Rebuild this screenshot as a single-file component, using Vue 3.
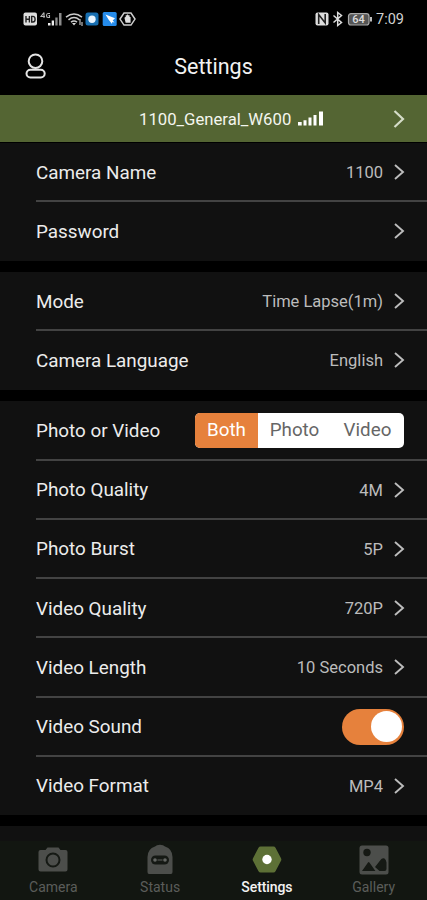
<script setup>
import { ref } from 'vue'

const groups = [
  [
    { label: 'Camera Name', value: '1100' },
    { label: 'Password', value: '' },
  ],
  [
    { label: 'Mode', value: 'Time Lapse(1m)' },
    { label: 'Camera Language', value: 'English' },
  ],
  [
    { label: 'Photo or Video', kind: 'segment' },
    { label: 'Photo Quality', value: '4M' },
    { label: 'Photo Burst', value: '5P' },
    { label: 'Video Quality', value: '720P' },
    { label: 'Video Length', value: '10 Seconds' },
    { label: 'Video Sound', kind: 'toggle' },
    { label: 'Video Format', value: 'MP4' },
  ],
]
const options = ['Both', 'Photo', 'Video']
const capture = ref('Both')
const sound = ref(true)
const tabs = ['Camera', 'Status', 'Settings', 'Gallery']
const tab = ref('Settings')
</script>

<template>
  <div class="screen">
    <div class="status">
      <svg class="status-left" width="114" height="18" viewBox="0 0 114 18">
        <rect x="0.5" y="2.5" width="13.5" height="13" rx="2" fill="#dedede" />
        <path d="M3 6v6.5M6.4 6v6.5M3 9.2h3.4M8.7 6.4h1.2q2.2 0 2.2 2.8t-2.200 2.8H8.7z" fill="none" stroke="#222" stroke-width="1.4" />
        <path d="M21 2.500l-3 4h4M21 2.500v5.500M27 3.500h-2q-1.500 0-1.500 2t1.500 2h1.500V5.500h-1" fill="none" stroke="#b5b5b5" stroke-width="1.100" />
        <path d="M25 15.500v-2.500h2.500v2.500zM28.700 15.500v-5h2.300v5z" fill="#eee" />
        <path d="M32.300 15.500v-8h2.300v8zM36 15.500V3h2.500v12.500z" fill="#8c8c8c" />
        <g fill="none" stroke="#ccc" stroke-width="1.5">
          <path d="M43 7.200q8-6.500 16 0M45.500 9.800q5.500-4.500 11 0M48 12.200q3-2.500 6 0" />
          <path d="M57 9v6M59 12v4" stroke-width="1.100" />
        </g>
        <path d="M49 13l2 2.500 2-2.500z" fill="#ddd" />
        <rect x="62.500" y="2.500" width="13" height="13" rx="2.500" fill="#176eb0" />
        <circle cx="69" cy="9.300" r="3.700" fill="#eaf6ff" />
        <rect x="79.700" y="2" width="14" height="14" rx="1.500" fill="#258bea" />
        <path d="M82.500 4.500l9.500 3.700-2.300 2.300 1.800 2-2.200-.5-.3 2-3.500-4.500z" fill="#fff" />
        <path d="M101 3.100h7l4 6-4 6h-7l-4-6z" fill="none" stroke="#ccc" stroke-width="1.500" />
        <path d="M101.500 8q0-1 1.200-1V5.300h1.200v-.8h1.200v.8h1.500V7h1v5.700h-5z" fill="#ddd" />
      </svg>
      <div class="status-right">
        <svg width="58" height="18" viewBox="0 0 58 18">
          <rect x="0.500" y="2.500" width="13" height="13" rx="2" fill="#ddd" />
          <path d="M3.700 14V4.500l6.500 8.500V4" fill="none" stroke="#222" stroke-width="1.600" />
          <path d="M18.500 5.500l8 7-3.800 3V2.500l3.800 3-8 7" fill="none" stroke="#ddd" stroke-width="1.500" />
          <rect x="33.500" y="3.700" width="20.500" height="11.300" rx="2.500" fill="#555" stroke="#aaa" stroke-width="1.200" />
          <path d="M55 7h2v4.500h-2z" fill="#bbb" />
          <text x="43.500" y="13" text-anchor="middle" class="battery">64</text>
        </svg>
        <span class="clock">7:09</span>
      </div>
    </div>

    <header class="header">
      <svg class="user" width="22" height="28" viewBox="0 0 22 28" fill="none" stroke="#e4e4e4" stroke-width="2">
        <circle cx="10.500" cy="9.200" r="6.800" />
        <rect x="1.500" y="17.700" width="18.200" height="7.800" rx="3.900" />
      </svg>
      <h1>Settings</h1>
    </header>

    <div class="device">
      <span class="device-name">1100_General_W600</span>
      <svg class="bars" width="26" height="15" viewBox="0 0 26 15" fill="#fff">
        <path d="M0 11h3.700v3.500H0zM5.500 9.300h3v5.200h-3zM10.500 6.500h3v8h-3zM15.500 4h3v10.500h-3zM21 .5h4v14h-4z" />
      </svg>
      <svg class="device-chevron" width="12" height="18" viewBox="0 0 12 18">
        <path d="M1.500 1l8.500 8-8.500 8" fill="none" stroke="#d5dcc8" stroke-width="2.200" />
      </svg>
    </div>

    <main class="list">
      <section v-for="(rows, i) in groups" :key="i" class="group">
        <div v-for="row in rows" :key="row.label" class="row">
          <span class="label">{{ row.label }}</span>
          <div v-if="row.kind === 'segment'" class="segment">
            <button v-for="o in options" :key="o" :class="{ on: capture === o }" @click="capture = o">{{ o }}</button>
          </div>
          <button v-else-if="row.kind === 'toggle'" class="toggle" :class="{ off: !sound }" @click="sound = !sound">
            <span class="knob"></span>
          </button>
          <template v-else>
            <span class="value">{{ row.value }}</span>
            <svg class="chevron" width="11" height="16" viewBox="0 0 11 16">
              <path d="M1 1l8 7-8 7" fill="none" stroke="#bdbdbd" stroke-width="1.900" />
            </svg>
          </template>
        </div>
      </section>
    </main>

    <nav class="tabs">
      <button v-for="t in tabs" :key="t" class="tab" :class="{ active: tab === t }" @click="tab = t">
        <svg v-if="t === 'Camera'" width="32" height="32" viewBox="0 0 32 32">
          <path d="M3.500 6h5l2-2.500h11l2 2.500h5q2 0 2 2v17.500q0 2-2 2h-25q-2 0-2-2V8q0-2 2-2z" fill="#4c4e4b" />
          <circle cx="16" cy="16" r="6.500" fill="none" stroke="#151914" stroke-width="2" />
        </svg>
        <svg v-else-if="t === 'Status'" width="32" height="32" viewBox="0 0 32 32">
          <path d="M3.500 28V13Q3.500 5 11 2.500q1.500-1.800 5-1.800t5 1.800Q28.500 5 28.500 13v15q0 2-1.500 2H5q-1.500 0-1.500-2z" fill="#4c4e4b" />
          <rect x="7" y="11.500" width="18" height="9" rx="4.500" fill="#151914" />
          <circle cx="11" cy="16" r="1.800" fill="#646663" />
          <circle cx="21" cy="16" r="1.800" fill="#646663" />
          <path d="M13.500 16h5" stroke="#464845" stroke-width="1.500" />
        </svg>
        <svg v-else-if="t === 'Settings'" width="32" height="32" viewBox="0 0 32 32">
          <path d="M9.500 2.500h13q1.300 0 2 1.200l5.500 10.500q.7 1.300 0 2.600l-5.500 10.500q-.7 1.200-2 1.200h-13q-1.300 0-2-1.200L2 16.800q-.7-1.300 0-2.600L7.500 3.700q.7-1.200 2-1.200z" fill="#5d7036" />
          <circle cx="16" cy="15.500" r="4.700" fill="#fff" />
        </svg>
        <svg v-else width="32" height="32" viewBox="0 0 32 32">
          <rect x="1.500" y="1.500" width="29" height="29" rx="2.500" fill="#4c4e4b" />
          <circle cx="9" cy="8.500" r="3.700" fill="#151914" />
          <path d="M4 27l6-8.500q.7-.8 1.400 0l6 8.500zM17 23l5.500-7q1.500-2.500 4-1.500 1.500 1 2 4V25q0 2-2 2h-5z" fill="#151914" />
        </svg>
        <span class="tab-label">{{ t }}</span>
      </button>
    </nav>
  </div>
</template>

<style>
body {
  background: #000;
}
</style>

<style scoped>
.screen {
  width: 427px;
  height: 900px;
  display: flex;
  flex-direction: column;
  overflow: hidden;
  background: #000;
  color: #e4e4e4;
  font-family: Roboto, "Liberation Sans", sans-serif;
}
.screen svg {
  display: block;
  flex: none;
}
button {
  border: 0;
  padding: 0;
  margin: 0;
  background: none;
  font: inherit;
  color: inherit;
}
.status {
  height: 37px;
  flex: none;
  display: flex;
  align-items: center;
  justify-content: space-between;
  padding: 0 23px;
}
.status-right {
  display: flex;
  align-items: center;
  gap: 3px;
}
.battery {
  font-size: 11px;
  font-weight: 500;
  fill: #ddd;
}
.clock {
  padding-top: 2px;
  font-size: 14.500px;
  color: #d0d0d0;
}
.header {
  height: 58px;
  flex: none;
  display: grid;
  grid-template-columns: 22px 1fr 22px;
  align-items: center;
  padding: 0 25px;
}
h1 {
  margin: 0;
  padding-top: 1px;
  font-size: 21.500px;
  font-weight: 400;
  text-align: center;
  color: #f2f2f2;
}
.device {
  height: 47px;
  flex: none;
  margin-bottom: 1px;
  display: flex;
  align-items: center;
  padding: 0 22px 0 139px;
  background: #546533;
}
.device-name {
  padding-top: 2px;
  font-size: 16.700px;
  color: #f4f6ef;
}
.bars {
  margin-left: 7px;
}
.device-chevron {
  margin-left: auto;
}
.list {
  flex: none;
  display: flex;
  flex-direction: column;
  gap: 11.400px;
}
.group {
  background: #111;
}
.row {
  box-sizing: border-box;
  height: 59.250px;
  margin-left: 36px;
  padding: 1px 22.500px 0 0;
  display: flex;
  align-items: center;
  border-bottom: 2px solid #434343;
}
.row:last-child {
  height: 58.500px;
  border-bottom-color: transparent;
}
.label {
  flex: 1;
  padding-top: 1px;
  font-size: 18.850px;
  color: #ececec;
}
.value {
  padding-top: 1px;
  font-size: 16.500px;
  color: #bcbcbc;
  margin-right: 10.500px;
}
.segment {
  width: 209px;
  height: 35px;
  margin-right: 0.500px;
  display: grid;
  grid-template-columns: 63px 73px 73px;
  border-radius: 5px;
  overflow: hidden;
  background: #fff;
  color: #666;
  font-size: 18.800px;
}
.segment .on {
  background: #e6813c;
  color: #fff;
}
.toggle {
  width: 62px;
  height: 36px;
  margin-right: 0.500px;
  padding: 2px;
  display: flex;
  justify-content: flex-end;
  align-items: center;
  border-radius: 18px;
  background: #e6813c;
}
.toggle.off {
  justify-content: flex-start;
  background: #555;
}
.knob {
  width: 31px;
  height: 31px;
  border-radius: 50%;
  background: #fff;
}
.tabs {
  flex: 1;
  margin-top: 11px;
  padding-top: 18px;
  display: grid;
  grid-template-columns: repeat(4, 1fr);
  background: linear-gradient(#111 15px, #121611 15px);
}
.tab {
  display: flex;
  flex-direction: column;
  align-items: center;
  font-size: 14px;
  color: #5b5d5a;
}
.tab-label {
  margin-top: 3px;
}
.tab.active {
  color: #f2f2f2;
}
.tab.active .tab-label {
  font-weight: 500;
  letter-spacing: -0.100px;
}
</style>
